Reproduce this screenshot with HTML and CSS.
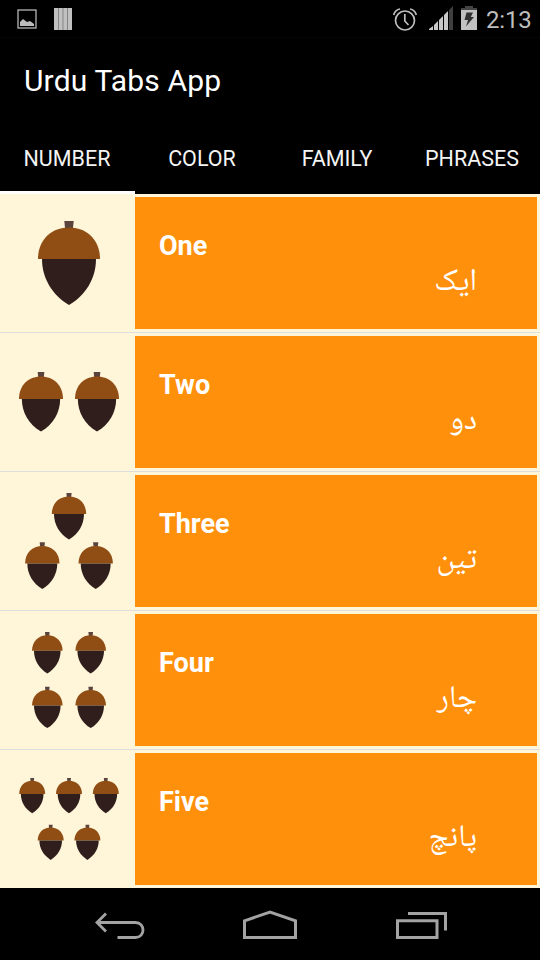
FILE: index.html
```html
<!DOCTYPE html>
<html lang="en">
<head>
<meta charset="utf-8">
<title>Urdu Tabs App</title>
<link rel="stylesheet" href="styles.css">
</head>
<body>
<svg class="defs" aria-hidden="true">
  <symbol id="acorn" viewBox="0 0 62 84" overflow="visible">
    <path fill="#5b433e" d="M26.3 0h9.4l-.8 8h-7.800z"/>
    <path fill="#904e14" d="M0 38C0 19 13 6.500 31 6.500S62 19 62 38z"/>
    <path fill="#2f1e1b" d="M4 38h54c0 19-10 36-27 46C14 74 4 57 4 38z"/>
  </symbol>
</svg>
<div class="screen">
  <header class="status">
    <div class="status-left">
      <svg class="ic-picture" width="20" height="20" viewBox="0 0 20 20"><rect x="1" y="1" width="18" height="18" fill="none" stroke="#b5b5b5" stroke-width="1.300"/><path fill="#bdbdbd" d="M3 17v-4l3-3 4 3 3-1 4 3v2z"/></svg>
      <svg class="ic-bars" width="18" height="22" viewBox="0 0 18 22"><path fill="#c0c0c0" d="M0 0h18v22H0z"/><path stroke="#858585" d="M4.500 0v22M9 0v22M13.500 0v22"/></svg>
    </div>
    <div class="status-right">
      <svg class="ic-alarm" width="24" height="23" viewBox="0 0 24 23"><g fill="none" stroke="#bebebe" stroke-width="1.700"><circle cx="12" cy="12.500" r="9.500"/><path d="M11.800 6v7l3.700 4M.7 7C1.500 4 4 1.500 7 1M23.300 7C22.500 4 20 1.500 17 1"/></g></svg>
      <svg class="ic-signal" width="24" height="24" viewBox="0 0 24 24"><path fill="#3f3f3f" d="M20 4l4-4v24h-4z"/><path fill="#c8c8c8" d="M0 24v-1l4-3v4zM5 24v-5l4-4v9zM10 24V14l4-4v14zM15 24V9l4-4v19z"/></svg>
      <svg class="ic-battery" width="16" height="24" viewBox="0 0 16 24"><path fill="#444" d="M4 0h8v2h4v3H0V2h4z"/><path fill="#c2c2c2" d="M0 4h16v20H0z"/><path fill="#333" d="M5.500 6.500H12L9.800 11H13L5 20.500l2-6.500H3.500z"/></svg>
      <span class="clock">2:13</span>
    </div>
  </header>
  <div class="toolbar"><h1 class="title">Urdu Tabs App</h1></div>
  <nav class="tabs">
    <div class="tab tab-active"><span>NUMBER</span></div>
    <div class="tab"><span>COLOR</span></div>
    <div class="tab"><span>FAMILY</span></div>
    <div class="tab"><span>PHRASES</span></div>
  </nav>
  <main class="list">
    <div class="row">
      <svg class="pic" viewBox="0 0 135 138"><use href="#acorn" x="38" y="27" width="62" height="84"/></svg>
      <div class="words"><div class="en">One</div><div class="ur" lang="ur" dir="rtl">ایک</div></div>
    </div>
    <div class="row">
      <svg class="pic" viewBox="0 0 135 138"><use href="#acorn" x="19" y="39" width="44" height="59.600"/><use href="#acorn" x="75" y="39" width="44" height="59.600"/></svg>
      <div class="words"><div class="en">Two</div><div class="ur" lang="ur" dir="rtl">دو</div></div>
    </div>
    <div class="row">
      <svg class="pic" viewBox="0 0 135 138"><use href="#acorn" x="51.800" y="21" width="34.400" height="46.600"/><use href="#acorn" x="25.100" y="70.300" width="34.400" height="46.600"/><use href="#acorn" x="78.500" y="70.300" width="34.400" height="46.600"/></svg>
      <div class="words"><div class="en">Three</div><div class="ur" lang="ur" dir="rtl">تین</div></div>
    </div>
    <div class="row">
      <svg class="pic" viewBox="0 0 135 138"><use href="#acorn" x="32" y="21" width="30.600" height="41.400"/><use href="#acorn" x="75.400" y="21" width="30.600" height="41.400"/><use href="#acorn" x="32" y="75.700" width="30.600" height="41.400"/><use href="#acorn" x="75.400" y="75.700" width="30.600" height="41.400"/></svg>
      <div class="words"><div class="en">Four</div><div class="ur" lang="ur" dir="rtl">چار</div></div>
    </div>
    <div class="row">
      <svg class="pic" viewBox="0 0 135 138"><use href="#acorn" x="19.200" y="28" width="26" height="35.200"/><use href="#acorn" x="56" y="28" width="26" height="35.200"/><use href="#acorn" x="92.800" y="28" width="26" height="35.200"/><use href="#acorn" x="37.700" y="74.700" width="26" height="35.200"/><use href="#acorn" x="74.400" y="74.700" width="26" height="35.200"/></svg>
      <div class="words"><div class="en">Five</div><div class="ur" lang="ur" dir="rtl">پانچ</div></div>
    </div>
  </main>
  <footer class="navbar">
    <svg width="50" height="28" viewBox="0 0 50 28"><g fill="none" stroke="#a3a3a3" stroke-width="2.800"><path d="M2 10.500h38.500c10 0 10 15 0 15H22.500"/><path d="M11 1.500L2 10.500l9 9"/></g></svg>
    <svg width="54" height="30" viewBox="0 0 54 30"><path fill="none" stroke="#a3a3a3" stroke-width="3" d="M1.500 10.800L27 2l25.500 8.800v16.700h-51z"/></svg>
    <svg width="51" height="27" viewBox="0 0 51 27"><path fill="none" stroke="#a3a3a3" stroke-width="3" d="M1.500 8.800h39.500v16.700h-39.500zM12 1.500h37.500v17"/></svg>
  </footer>
</div>
</body>
</html>
```
FILE: styles.css
```css
* { box-sizing: border-box; }
body { margin: 0; background: #000; font-family: Roboto, sans-serif; color: #fff; }
svg { display: block; flex: none; }
.defs { position: absolute; width: 0; height: 0; }
.screen { width: 540px; height: 960px; display: flex; flex-direction: column; overflow: hidden; }

.status { height: 38px; display: flex; justify-content: space-between; padding: 0 9px 0 17px; border-bottom: 1px solid #050505; }
.status-left, .status-right { display: flex; align-items: flex-start; }
.ic-picture { margin-top: 9px; }
.ic-bars { margin: 8px 0 0 17px; }
.ic-alarm { margin: 8px 12px 0 0; }
.ic-signal { margin: 6px 8px 0 0; }
.ic-battery { margin: 6px 9px 0 0; }
.clock { font-size: 24px; line-height: 40px; color: #bebebe; width: 45px; white-space: nowrap; letter-spacing: -0.2px; }

.toolbar { height: 84px; display: flex; align-items: center; padding: 2px 0 0 24px; }
.title { margin: 0; font-size: 30px; font-weight: 400; line-height: 36px; letter-spacing: 0.15px; }

.tabs { height: 72px; display: grid; grid-template-columns: repeat(4, 135px); }
.tab { display: flex; align-items: center; justify-content: center; font-size: 21.500px; line-height: 24px; padding: 5px 1px 0 0; border-bottom: 3px solid #000; color: #f4f4f4; }
.tab-active { border-bottom-color: #fff; }

.list { height: 694px; background: #fff6da; }
.row { height: 139px; display: flex; border-bottom: 1px solid #dedede; }
.row:last-child { height: 138px; border-bottom: 0; }
.pic { width: 135px; height: 138px; }
.words { flex: 1; height: 132px; margin: 3px 3px 0 0; padding: 32px 60px 0 24px; background: #ff900c; }
.en { font-size: 27px; font-weight: 700; line-height: 34px; }
.ur { font-family: "Noto Naskh Arabic", "Noto Sans Arabic", "DejaVu Sans", sans-serif; font-size: 31.500px; line-height: 40px; }

.navbar { height: 72px; display: flex; align-items: flex-start; padding: 22px 93px 0 95px; justify-content: space-between; }
.navbar svg:nth-child(1) { margin-top: 2px; }
.navbar svg:nth-child(2) { margin: 0 1px 0 -1px; }
.navbar svg:nth-child(3) { margin-top: 2px; }
```
